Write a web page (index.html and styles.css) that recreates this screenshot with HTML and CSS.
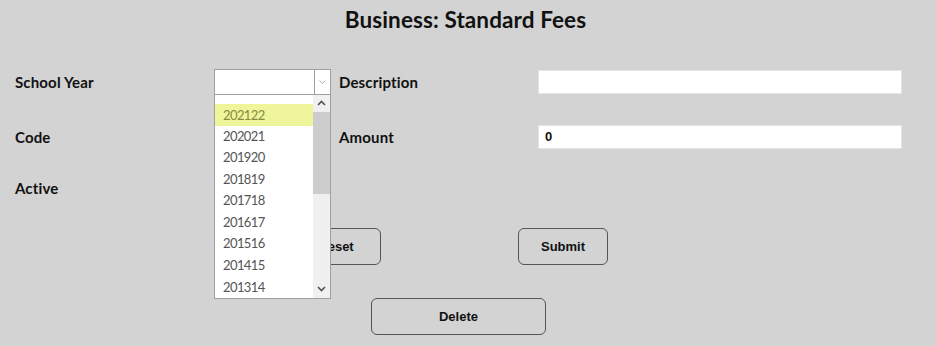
FILE: index.html
```html
<!DOCTYPE html>
<html>
<head>
<meta charset="utf-8">
<link rel="stylesheet" href="styles.css">
</head>
<body>
<h1 class="title">Business: Standard Fees</h1>
<div class="form">
  <div class="row row1">
    <label class="label">School Year</label>
    <div class="cell">
      <div class="select">
        <span class="select-arrow">
          <svg width="7" height="4" viewBox="0 0 7 4"><path d="M0.5 0.5 L3.5 3.2 L6.5 0.5" fill="none" stroke="#b0b0b0" stroke-width="1"/></svg>
        </span>
        <div class="dropdown">
          <ul class="options">
            <li class="opt active">202122</li>
            <li class="opt">202021</li>
            <li class="opt">201920</li>
            <li class="opt">201819</li>
            <li class="opt">201718</li>
            <li class="opt">201617</li>
            <li class="opt">201516</li>
            <li class="opt">201415</li>
            <li class="opt">201314</li>
          </ul>
          <div class="scrollbar">
            <div class="sb-btn">
              <svg width="9" height="6" viewBox="0 0 9 6"><path d="M1 5 L4.5 1.5 L8 5" fill="none" stroke="#505050" stroke-width="1.6"/></svg>
            </div>
            <div class="sb-thumb"></div>
            <div class="sb-track"></div>
            <div class="sb-btn">
              <svg width="9" height="6" viewBox="0 0 9 6"><path d="M1 1 L4.5 4.5 L8 1" fill="none" stroke="#505050" stroke-width="1.6"/></svg>
            </div>
          </div>
        </div>
      </div>
    </div>
    <label class="label">Description</label>
    <div class="cell"><div class="input"></div></div>
  </div>
  <div class="row row2">
    <label class="label">Code</label>
    <div class="cell"></div>
    <label class="label">Amount</label>
    <div class="cell"><div class="input">0</div></div>
  </div>
  <div class="row row3">
    <label class="label">Active</label>
  </div>
  <div class="buttons">
    <button class="btn">Reset</button>
    <button class="btn">Submit</button>
  </div>
  <div class="buttons2">
    <button class="btn wide">Delete</button>
  </div>
</div>
</body>
</html>
```

FILE: styles.css
```css
html, body {
  margin: 0;
  padding: 0;
  background: #d3d3d3;
}
body {
  font-family: Lato, "Noto Sans", sans-serif;
  color: #111;
  width: 936px;
  height: 346px;
  overflow: hidden;
}
.title {
  margin: 0;
  padding-top: 7px;
  height: 29px;
  font-size: 22.5px;
  line-height: 26px;
  font-weight: 700;
  text-align: center;
  padding-right: 5px;
  letter-spacing: 0.1px;
}
.form {
  padding-left: 15px;
  padding-top: 32px;
}
.row {
  display: grid;
  grid-template-columns: 199px 125px 199px 364px;
  align-items: center;
  height: 26px;
}
.row2 { margin-top: 29px; }
.row3 { margin-top: 25px; }
.label {
  font-weight: 700;
  font-size: 15px;
  line-height: 26px;
  padding-top: 1px;
  letter-spacing: 0.15px;
}
.cell { position: relative; height: 26px; }
.select {
  position: relative;
  box-sizing: border-box;
  width: 117px;
  height: 26px;
  border: 1px solid #a0a0a0;
  background: #fff;
}
.select-arrow {
  position: absolute;
  right: 0;
  top: 0;
  width: 15px;
  height: 24px;
  border-left: 1px solid #a0a0a0;
  display: flex;
  align-items: center;
  justify-content: center;
}
.dropdown {
  position: absolute;
  left: -1px;
  top: 25px;
  width: 117px;
  height: 204px;
  box-sizing: border-box;
  border: 1px solid #a0a0a0;
  border-top: none;
  background: #fff;
  display: flex;
  z-index: 5;
}
.options {
  list-style: none;
  margin: 0;
  padding: 9px 0 0 0;
  flex: 1;
  overflow: hidden;
}
.opt {
  height: 21.6px;
  line-height: 21.6px;
  padding-left: 8px;
  font-size: 13px;
  letter-spacing: -0.6px;
  color: #555;
}
.opt.active {
  background: #eef59b;
  color: #8a8a3c;
  height: 22px;
  line-height: 22px;
}
.scrollbar {
  width: 17px;
  display: flex;
  flex-direction: column;
  background: #f0f0f0;
}
.sb-btn {
  height: 17px;
  display: flex;
  align-items: center;
  justify-content: center;
  background: #f0f0f0;
}
.sb-thumb {
  height: 82px;
  background: #cdcdcd;
}
.sb-track { flex: 1; }
.input {
  box-sizing: border-box;
  width: 364px;
  height: 24px;
  margin-top: 1px;
  background: #fff;
  border: 1px solid #e4e4e4;
  font-family: "Liberation Sans", Arial, sans-serif;
  font-weight: 700;
  font-size: 13px;
  line-height: 22px;
  padding-left: 6px;
}
.buttons {
  display: flex;
  gap: 137px;
  margin-top: 28px;
  margin-left: 276px;
}
.buttons2 {
  display: flex;
  margin-top: 33px;
  margin-left: 356px;
}
.btn {
  box-sizing: border-box;
  width: 90px;
  height: 37px;
  border: 1px solid #555;
  border-radius: 6px;
  background: transparent;
  font-family: "Liberation Sans", Arial, sans-serif;
  font-weight: 700;
  font-size: 13px;
  color: #111;
  padding: 0;
}
.btn.wide { width: 175px; }
```
